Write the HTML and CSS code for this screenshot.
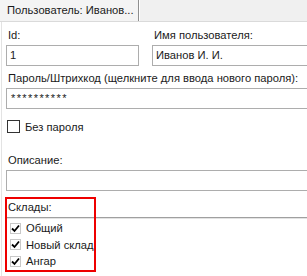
FILE: index.html
```html
<!DOCTYPE html>
<html>
<head>
<meta charset="utf-8">
<link rel="stylesheet" href="styles.css">
</head>
<body>
<div class="tabbar">
  <div class="tab">Пользователь: Иванов...</div>
</div>
<div class="panel">
  <div class="row two">
    <div class="field">
      <div class="label">Id:</div>
      <div class="input">1</div>
    </div>
    <div class="field">
      <div class="label">Имя пользователя:</div>
      <div class="input open">Иванов И. И.</div>
    </div>
  </div>
  <div class="field pwfield">
    <div class="label">Пароль/Штрихкод (щелкните для ввода нового пароля):</div>
    <div class="input open pw">**********</div>
  </div>
  <div class="check">
    <span class="box"></span>
    <span>Без пароля</span>
  </div>
  <div class="field desc">
    <div class="label">Описание:</div>
    <div class="input open"></div>
  </div>
  <div class="stores">
    <div class="stores-head">Склады:</div>
    <div class="sep"></div>
    <div class="list">
      <div class="item"><span class="cb"><svg width="9" height="9" viewBox="0 0 9 9"><path d="M1 4.5 L3.5 7 L8 1.5" fill="none" stroke="#000" stroke-width="1.8"/></svg></span>Общий</div>
      <div class="item"><span class="cb"><svg width="9" height="9" viewBox="0 0 9 9"><path d="M1 4.5 L3.5 7 L8 1.5" fill="none" stroke="#000" stroke-width="1.8"/></svg></span>Новый склад</div>
      <div class="item"><span class="cb"><svg width="9" height="9" viewBox="0 0 9 9"><path d="M1 4.5 L3.5 7 L8 1.5" fill="none" stroke="#000" stroke-width="1.8"/></svg></span>Ангар</div>
    </div>
    <div class="redbox"></div>
  </div>
</div>
</body>
</html>
```
FILE: styles.css
```css
html, body {
  margin: 0;
  padding: 0;
  background: #fff;
}
body {
  width: 307px;
  height: 276px;
  overflow: hidden;
  font-family: "Liberation Sans", Arial, sans-serif;
  font-size: 11.2px;
  color: #1a1a1a;
}
.tabbar {
  height: 21px;
  background: #f0f0f0;
  border-bottom: 1px solid #dadada;
  display: flex;
}
.tab {
  width: 131px;
  padding-left: 7px;
  line-height: 21px;
  background: #f4f4f4;
  border-right: 1px solid #8f8f8f;
  box-shadow: 1px 0 0 #fff;
  white-space: nowrap;
}
.panel {
  border-left: 1px solid #e3e3e3;
  margin-left: 1px;
  padding: 6px 0 0 4px;
  width: 306px;
  height: 254px;
  box-sizing: border-box;
}
.row.two {
  display: grid;
  grid-template-columns: 133px 1fr;
  column-gap: 13px;
}
.field {
  display: flex;
  flex-direction: column;
}
.label {
  padding-left: 2px;
  height: 15px;
  line-height: 15px;
  margin-bottom: 2px;
  white-space: nowrap;
}
.input {
  height: 19px;
  line-height: 19px;
  border: 1px solid #adadad;
  background: #fff;
  padding-left: 3px;
  white-space: nowrap;
  overflow: hidden;
}
.input.open {
  border-right: none;
}
.pwfield {
  margin-top: 5px;
}
.pw {
  font-size: 11px;
  letter-spacing: 1.4px;
  padding-left: 4px;
}
.check {
  display: flex;
  align-items: center;
  gap: 5px;
  margin-top: 10px;
  padding-left: 1px;
  height: 15px;
}
.box {
  width: 11px;
  height: 11px;
  border: 1px solid #333;
  background: #fff;
}
.desc {
  margin-top: 19px;
}
.stores {
  position: relative;
  margin-top: 6px;
  margin-left: -1px;
  padding-top: 3px;
  height: 75px;
  box-sizing: border-box;
}
.stores-head {
  padding-left: 3px;
  height: 14px;
  line-height: 14px;
}
.sep {
  height: 1px;
  background: #a0a0a0;
  border-bottom: 1px solid #e3e3e3;
  margin-top: 3px;
}
.list {
  padding: 1px 0 0 5px;
}
.item {
  display: flex;
  align-items: center;
  height: 16.5px;
  gap: 5px;
}
.cb {
  width: 11px;
  height: 11px;
  border: 1px solid #c8c8c8;
  box-sizing: border-box;
  display: flex;
  align-items: center;
  justify-content: center;
  background: #fff;
}
.redbox {
  position: absolute;
  left: 0;
  top: 0;
  width: 87px;
  height: 71px;
  border: 2px solid #ee0000;
}
```
